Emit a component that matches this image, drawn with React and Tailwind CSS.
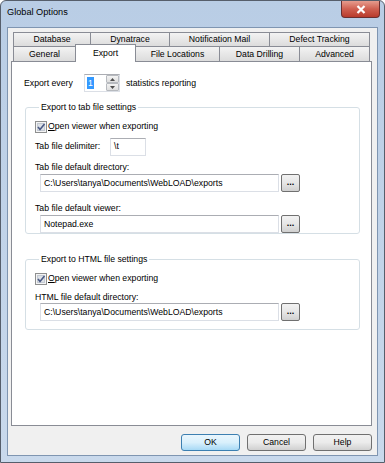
import React from 'react';

const font = { fontFamily: '"Liberation Sans", Arial, sans-serif' };

const Tab = ({ label, w, first }) => (
  <div
    className={`h-full flex items-center justify-center border border-b-0 border-[#898c95] bg-gradient-to-b from-[#f3f3f3] to-[#dcdcdc] text-black ${first ? '' : '-ml-px'}`}
    style={{ width: w }}
  >
    {label}
  </div>
);

const CheckBox = () => (
  <svg width="12" height="12" viewBox="0 0 12 12" className="shrink-0">
    <rect x="0.5" y="0.5" width="11" height="11" fill="#f4f4f4" stroke="#8e8f8f" />
    <rect x="2.5" y="2.5" width="7" height="7" fill="#dde1e6" stroke="#c3c9d2" />
    <path d="M3 6 L5 8.5 L9.5 3" fill="none" stroke="#4a5a85" strokeWidth="1.6" />
  </svg>
);

const TextBox = ({ value, className }) => (
  <div
    className={`h-[18px] flex items-center px-[3px] bg-white border border-[#dbdfe6] border-t-[#abadb3] text-black ${className}`}
  >
    {value}
  </div>
);

const BrowseButton = () => (
  <div className="w-[19px] h-[18px] ml-[2px] flex items-center justify-center rounded-[2px] border border-[#707070] bg-gradient-to-b from-[#f2f2f2] via-[#e6e6e6] to-[#d0d0d0] text-[9px] font-bold leading-none pb-[2px]">
    ...
  </div>
);

const DialogButton = ({ label, focused }) => (
  <div
    className={`w-[59px] h-[17px] flex items-center justify-center rounded-[3px] border text-black ${
      focused
        ? 'border-[#3c7fb1] bg-gradient-to-b from-[#eaf6fd] via-[#d9f0fc] to-[#a7d9f5]'
        : 'border-[#707070] bg-gradient-to-b from-[#f2f2f2] via-[#ebebeb] to-[#d0d0d0]'
    }`}
  >
    {label}
  </div>
);

export default function App() {
  return (
    <div
      className="w-[385px] h-[463px] flex flex-col bg-gradient-to-b from-[#b9cde5] to-[#c9d9ec] border border-[#565e6b] rounded-t-[6px] text-[8.7px] leading-none overflow-hidden"
      style={font}
    >
      {/* title bar */}
      <div className="h-[26px] shrink-0 flex items-start justify-between pl-[6px] pr-[4px]">
        <span className="mt-[7px] text-[9.2px] text-black">Global Options</span>
        <div className="w-[39px] h-[17px] flex items-center justify-center rounded-b-[4px] border border-t-0 border-[#6b2f2f] bg-gradient-to-b from-[#e59c8e] via-[#cf5f50] to-[#b83a2c]">
          <svg width="10" height="9" viewBox="0 0 10 9">
            <path d="M1.5 1 L8.5 8 M8.5 1 L1.5 8" stroke="#ffffff" strokeWidth="2.2" />
          </svg>
        </div>
      </div>

      {/* client area */}
      <div className="flex-1 mx-[6px] mb-[6px] flex flex-col bg-[#f0f0f0] border border-[#7f95b1] pl-[3px] pt-[4px]">
        {/* tabs */}
        <div className="ml-[2px] flex h-[14px]">
          <Tab label="Database" w={78} first />
          <Tab label="Dynatrace" w={80} />
          <Tab label="Notification Mail" w={101} />
          <Tab label="Defect Tracking" w={101} />
        </div>
        <div className="ml-[2px] flex h-[15px] items-end">
          <Tab label="General" w={63} first />
          <div className="relative z-10 -ml-px w-[61px] h-[18px] -mb-px flex items-start justify-center pt-[4px] bg-white border border-b-0 border-[#898c95]">
            Export
          </div>
          <Tab label="File Locations" w={85} />
          <Tab label="Data Drilling" w={81} />
          <Tab label="Advanced" w={71} />
        </div>

        {/* panel */}
        <div className="w-[361px] h-[365px] bg-white border border-[#898c95] flex flex-col pl-[12px]">
          <div className="mt-[12px] flex items-center h-[18px]">
            <span className="w-[60px]">Export every</span>
            <div className="flex h-[18px] border border-[#dbdfe6] border-t-[#abadb3] bg-white">
              <div className="w-[21px] flex items-center pl-[2px]">
                <span className="bg-[#3399ff] text-white px-[1px] py-[2px]">1</span>
              </div>
              <div className="w-[13px] flex flex-col">
                <div className="h-1/2 flex items-center justify-center border border-[#b7babf] rounded-[1px] bg-gradient-to-b from-[#f3f3f3] to-[#dedede]">
                  <svg width="5" height="3" viewBox="0 0 5 3"><path d="M0 3 L2.5 0 L5 3Z" fill="#4d4d4d" /></svg>
                </div>
                <div className="h-1/2 flex items-center justify-center border border-[#b7babf] rounded-[1px] bg-gradient-to-b from-[#f3f3f3] to-[#dedede]">
                  <svg width="5" height="3" viewBox="0 0 5 3"><path d="M0 0 L2.5 3 L5 0Z" fill="#4d4d4d" /></svg>
                </div>
              </div>
            </div>
            <span className="ml-[6px]">statistics reporting</span>
          </div>

          {/* group 1 */}
          <fieldset className="mt-[11px] ml-px w-[335px] h-[131px] border border-[#d5dfe5] rounded-[3px] pl-[9px]">
            <legend className="ml-[4px] px-[2px]">Export to tab file settings</legend>
            <div className="mt-[9px] flex items-center">
              <CheckBox />
              <span className="ml-[1px]"><span className="underline">O</span>pen viewer when exporting</span>
            </div>
            <div className="mt-[5px] flex items-center">
              <span className="w-[75px]">Tab file delimiter:</span>
              <TextBox value="\t" className="w-[36px] h-[15px]" />
            </div>
            <div className="mt-[7px]">Tab file default directory:</div>
            <div className="mt-[3px] ml-[5px] flex items-center">
              <TextBox value="C:\Users\tanya\Documents\WebLOAD\exports" className="w-[239px]" />
              <BrowseButton />
            </div>
            <div className="mt-[12px]">Tab file default viewer:</div>
            <div className="mt-[2px] ml-[5px] flex items-center">
              <TextBox value="Notepad.exe" className="w-[239px]" />
              <BrowseButton />
            </div>
          </fieldset>

          {/* group 2 */}
          <fieldset className="mt-[21px] ml-px w-[335px] h-[75px] border border-[#d5dfe5] rounded-[3px] pl-[9px]">
            <legend className="ml-[4px] px-[2px]">Export to HTML file settings</legend>
            <div className="mt-[9px] flex items-center">
              <CheckBox />
              <span className="ml-[1px]"><span className="underline">O</span>pen viewer when exporting</span>
            </div>
            <div className="mt-[8px]">HTML file default directory:</div>
            <div className="mt-[2px] ml-[5px] flex items-center">
              <TextBox value="C:\Users\tanya\Documents\WebLOAD\exports" className="w-[239px]" />
              <BrowseButton />
            </div>
          </fieldset>
        </div>

        {/* buttons */}
        <div className="mt-[8px] flex justify-end gap-[7px] w-[361px]">
          <DialogButton label="OK" focused />
          <DialogButton label="Cancel" />
          <DialogButton label="Help" />
        </div>
      </div>
    </div>
  );
}
